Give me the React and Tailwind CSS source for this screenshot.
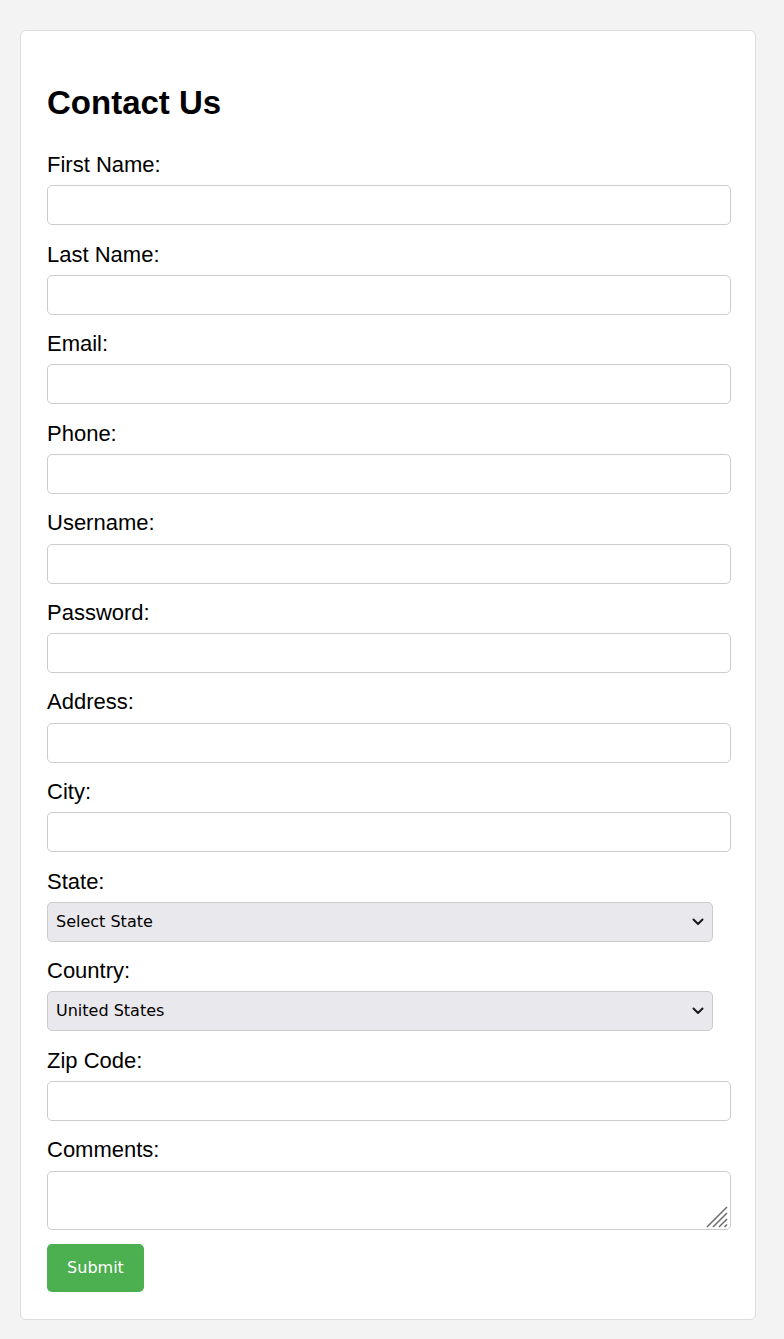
import { useState } from "react";

const fields = [
  { id: "firstName", label: "First Name:", type: "text" },
  { id: "lastName", label: "Last Name:", type: "text" },
  { id: "email", label: "Email:", type: "email" },
  { id: "phone", label: "Phone:", type: "tel" },
  { id: "username", label: "Username:", type: "text" },
  { id: "password", label: "Password:", type: "password" },
  { id: "address", label: "Address:", type: "text" },
  { id: "city", label: "City:", type: "text" },
];

const inputCls =
  "block w-full h-[40px] rounded-[5px] border border-[#cccccc] bg-white px-2 text-[16px] outline-none";
const labelCls = "block text-[22px] leading-[24.6px] mb-[7.6px]";

function Chevron() {
  return (
    <svg
      className="pointer-events-none absolute right-[9px] top-1/2 -translate-y-1/2"
      width="12"
      height="8"
      viewBox="0 0 12 8"
      fill="none"
    >
      <path d="M1.5 1.5 L6 6 L10.5 1.5" stroke="#1a1a1a" strokeWidth="2" strokeLinecap="round" strokeLinejoin="round" />
    </svg>
  );
}

function Select({ id, value, onChange, children }) {
  return (
    <div className="relative w-[666px]">
      <select
        id={id}
        value={value}
        onChange={onChange}
        className="block w-full h-[40px] appearance-none rounded-[5px] border border-[#cccccc] bg-[#e9e8ed] pl-[8px] text-[16px] text-black outline-none"
        style={{ fontFamily: '"DejaVu Sans", sans-serif' }}
      >
        {children}
      </select>
      <Chevron />
    </div>
  );
}

function Grip() {
  return (
    <svg
      className="pointer-events-none absolute right-[3px] bottom-[2px]"
      width="22"
      height="22"
      viewBox="0 0 22 22"
      fill="none"
      stroke="#6f6f6f"
      strokeWidth="1.6"
    >
      <path d="M1 21 L21 1" />
      <path d="M7 21 L21 7" />
      <path d="M13 21 L21 13" />
      <path d="M18.5 21 L21 18.5" />
    </svg>
  );
}

export default function App() {
  const [state, setState] = useState("");
  const [country, setCountry] = useState("US");

  return (
    <div
      className="min-h-[1339px] bg-[#f3f3f3] px-[20px] pt-[30px] pb-[19px] text-black"
      style={{ fontFamily: '"Liberation Sans", Arial, sans-serif' }}
    >
      <form
        onSubmit={(e) => e.preventDefault()}
        className="w-[736px] rounded-[6px] border border-[#dddddd] bg-white pl-[26px] pr-[24px] pt-[53px] pb-[27px]"
      >
        <h1 className="text-[33px] font-bold leading-[38px] mb-[31px]">Contact Us</h1>

        {fields.map((f) => (
          <div key={f.id} className="mb-[17.4px]">
            <label htmlFor={f.id} className={labelCls}>
              {f.label}
            </label>
            <input id={f.id} type={f.type} className={inputCls} />
          </div>
        ))}

        <div className="mb-[17.4px]">
          <label htmlFor="state" className={labelCls}>
            State:
          </label>
          <Select id="state" value={state} onChange={(e) => setState(e.target.value)}>
            <option value="">Select State</option>
            <option value="CA">California</option>
            <option value="NY">New York</option>
            <option value="TX">Texas</option>
          </Select>
        </div>

        <div className="mb-[17.4px]">
          <label htmlFor="country" className={labelCls}>
            Country:
          </label>
          <Select id="country" value={country} onChange={(e) => setCountry(e.target.value)}>
            <option value="US">United States</option>
            <option value="CA">Canada</option>
            <option value="MX">Mexico</option>
          </Select>
        </div>

        <div className="mb-[17.4px]">
          <label htmlFor="zip" className={labelCls}>
            Zip Code:
          </label>
          <input id="zip" type="text" className={inputCls} />
        </div>

        <div className="mb-[14px]">
          <label htmlFor="comments" className={labelCls}>
            Comments:
          </label>
          <div className="relative">
            <textarea
              id="comments"
              className="block w-full h-[59px] resize-none rounded-[5px] border border-[#cccccc] bg-white px-2 text-[16px] outline-none"
            />
            <Grip />
          </div>
        </div>

        <button
          type="submit"
          className="h-[48px] w-[97px] rounded-[5px] bg-[#4caf50] text-[16px] text-white"
          style={{ fontFamily: '"DejaVu Sans", sans-serif' }}
        >
          Submit
        </button>
      </form>
    </div>
  );
}
